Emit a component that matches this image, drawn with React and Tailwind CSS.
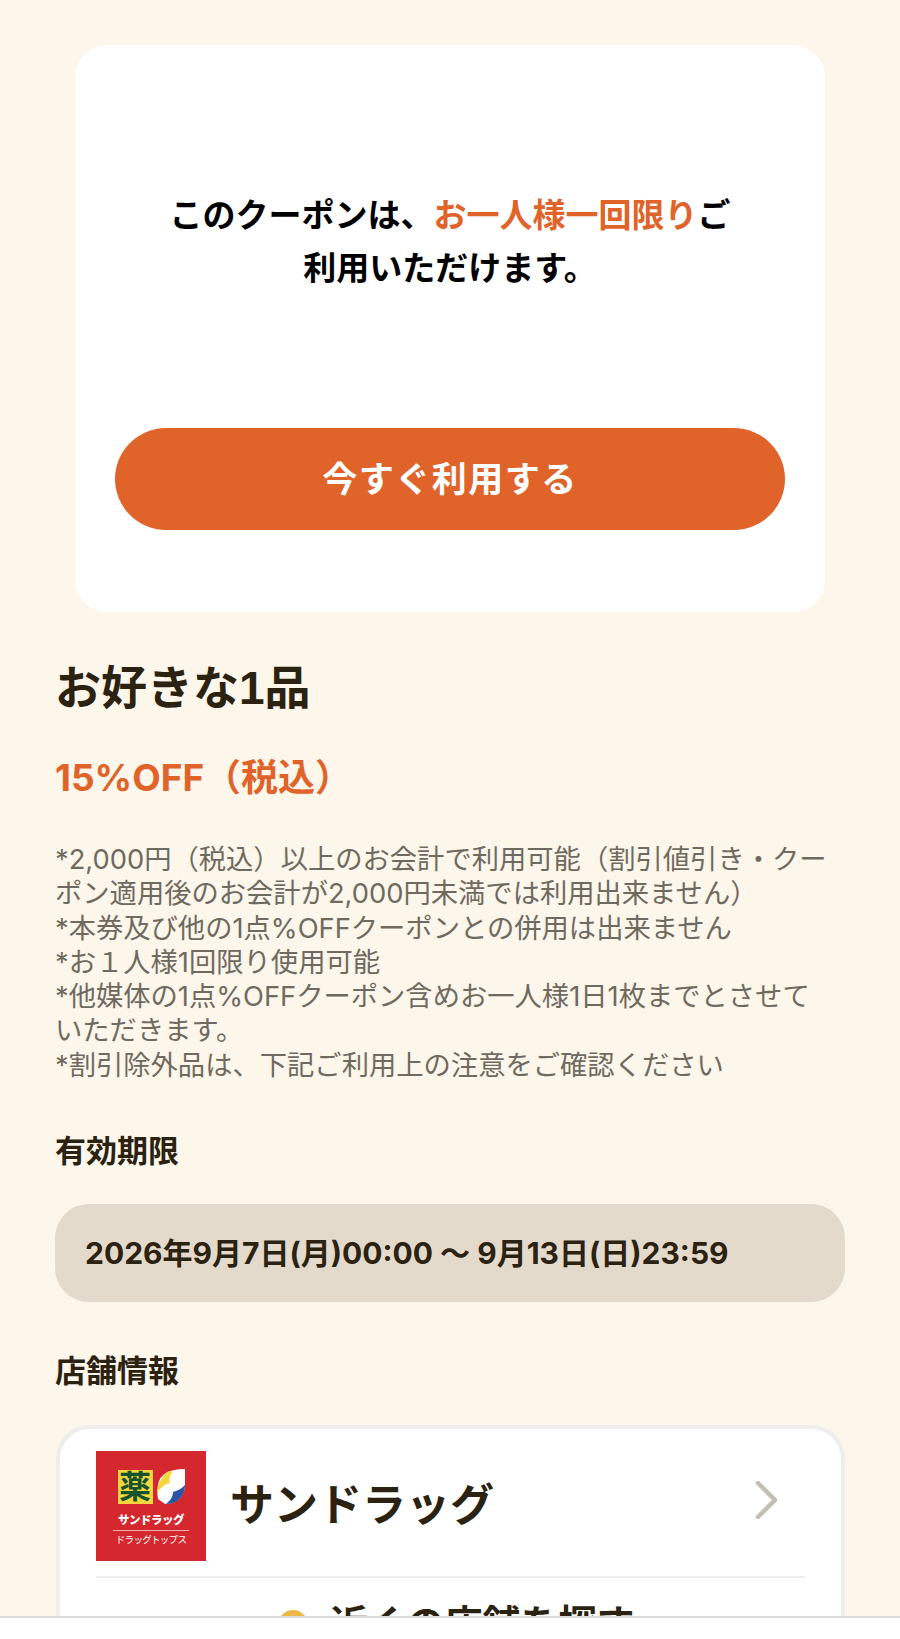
const CJK = "font-['Liberation_Sans','Noto_Sans_CJK_JP',sans-serif]"
const WIDE = "font-['Inter','Noto_Sans_CJK_JP',sans-serif]"

const NOTES = [
  '*2,000円（税込）以上のお会計で利用可能（割引値引き・クーポン適用後のお会計が2,000円未満では利用出来ません）',
  '*本券及び他の1点%OFFクーポンとの併用は出来ません',
  '*お１人様1回限り使用可能',
  '*他媒体の1点%OFFクーポン含めお一人様1日1枚までとさせていただきます。',
  '*割引除外品は、下記ご利用上の注意をご確認ください',
]

function StoreLogo() {
  return (
    <div className="w-[110px] h-[110px] shrink-0 bg-[#d4272e] flex flex-col items-center pt-[18px]">
      <div className="flex items-center gap-[4px]">
        <span className="w-[35px] h-[34px] bg-[#f5d63c] text-[#14532d] text-[32px] leading-[34px] font-bold text-center">薬</span>
        <svg width="28" height="35" viewBox="0 0 28 35">
          <path d="M28 0C18 0 6 2 2 12 0 18 0 24 1 30l7 5c12 0 20-7 20-20z" fill="#fff" />
          <path d="M13 2C6 5 1 13 0 24c3-5 8-9 13-10-1-5 0-9 3-11z" fill="#f5d63c" />
          <path d="M28 16c-4 4-8 6-12 7 0 5-3 9-7 12 11 0 19-7 19-19z" fill="#2a55a5" />
        </svg>
      </div>
      <span className="mt-[9px] text-white text-[11.5px] leading-[14px] font-black tracking-[-0.5px] border-b border-[#f0b0b0] pb-[3px] w-[76px] text-center">サンドラッグ</span>
      <span className="mt-[2px] text-white text-[9.5px] leading-[14px] tracking-[-0.7px]">ドラッグトップス</span>
    </div>
  )
}

export default function App() {
  return (
    <div className={`h-[1639px] flex flex-col overflow-hidden bg-[#fdf6ea] ${CJK}`}>
      <div className="flex-1 min-h-0 overflow-hidden">
        <div className="pt-[45px] px-[75px]">
          <div className="bg-white rounded-[32px] h-[567px] px-[80px] pt-[144px]">
            <p className="text-[33px] leading-[53px] font-bold text-black text-center">
              このクーポンは、<span className="text-[#e0632a]">お一人様一回限り</span>ご利用いただけます。
            </p>
            <button className="mt-[133px] -mx-[40px] w-[670px] h-[102px] pt-[3px] rounded-full bg-[#e0632a] text-white text-[35px] font-bold tracking-[1.5px]">
              今すぐ利用する
            </button>
          </div>
        </div>

        <div className="px-[55px]">
          <h1 className="mt-[51px] text-[46px] leading-[50px] font-bold text-[#2b2211]">お好きな1品</h1>
          <p className={`mt-[43px] text-[37px] leading-[44px] font-bold text-[#e0632a] ${WIDE}`}>15%OFF（税込）</p>
          <div className={`mt-[43px] pr-[12px] text-[27.3px] leading-[34.3px] text-[#6f6a60] font-normal ${WIDE}`}>
            {NOTES.map((n) => (
              <p key={n}>{n}</p>
            ))}
          </div>

          <h2 className="mt-[49px] text-[31px] leading-[40px] font-bold text-[#2b2211]">有効期限</h2>
          <div className={`mt-[32px] h-[98px] rounded-[34px] bg-[#e3dacc] flex items-center px-[30px] text-[30px] font-bold text-[#2b2211] ${WIDE}`}>
            2026年9月7日(月)00:00 ～ 9月13日(日)23:59
          </div>

          <h2 className="mt-[50px] text-[31px] leading-[40px] font-bold text-[#2b2211]">店舗情報</h2>
          <div className="mt-[33px] ml-[1px] bg-white rounded-[34px] border-[4px] border-[#eeeeee] px-[36px] pt-[22px] h-[300px]">
            <div className="flex items-center pb-[15px] border-b-2 border-[#eeeeee]">
              <StoreLogo />
              <span className="ml-[24px] text-[44px] font-bold text-[#2b2211]">サンドラッグ</span>
              <svg className="ml-auto mr-[26px] mb-[12px]" width="24" height="38" viewBox="0 0 24 38" fill="none">
                <path d="M3 2l17 17L3 36" stroke="#c4bfb4" strokeWidth="4.5" strokeLinecap="round" strokeLinejoin="round" />
              </svg>
            </div>
            <div className="mt-[18px] pl-[12px] flex items-center justify-center gap-[22px]">
              <span className="w-[30px] h-[30px] rounded-full bg-[#eab94a]" />
              <span className="text-[38px] font-bold text-[#2b2211]">近くの店舗を探す</span>
            </div>
          </div>
        </div>
      </div>
      <div className="h-[23px] shrink-0 bg-white border-t-2 border-[#dddddd]" />
    </div>
  )
}
